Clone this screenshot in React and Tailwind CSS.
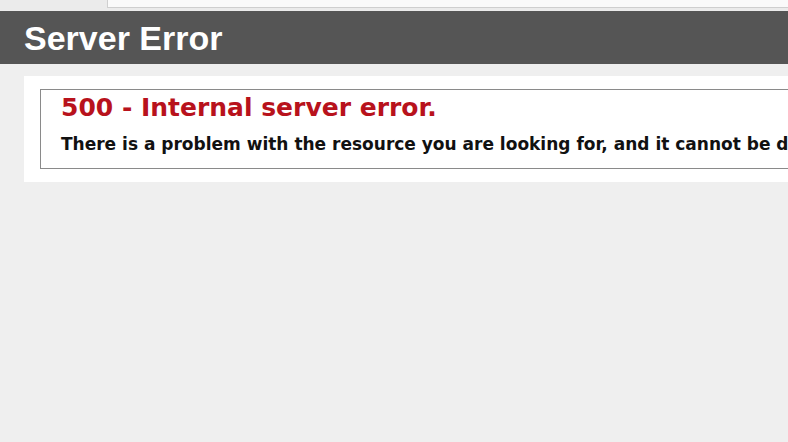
export default function App() {
  return (
    <div className="h-screen w-full overflow-hidden bg-[#efefef] font-['DejaVu_Sans',Verdana,sans-serif]">
      {/* browser chrome sliver */}
      <div className="flex h-[11px] bg-[#ebebeb]">
        <div className="ml-[107px] h-[8px] flex-1 border-b border-l border-[#cfcfcf] bg-[#fafafa]" />
      </div>

      <div className="flex h-[53px] items-center bg-[#555555] pl-[24px]">
        <h1 className="whitespace-nowrap font-['Liberation_Sans',Arial,sans-serif] text-[34px] font-bold leading-none text-white">
          Server Error
        </h1>
      </div>

      <div className="ml-[24px] mt-[12px] w-[900px] bg-white py-[13px] pl-[16px]">
        <div className="h-[80px] border border-[#8a8a8a] pl-[20px] pt-[3px]">
          <h2 className="whitespace-nowrap text-[25px] font-bold leading-[30px] text-[#b8121c]">
            500 - Internal server error.
          </h2>
          <h3 className="mt-[10px] whitespace-nowrap text-[17px] font-bold leading-[22px] text-[#111]">
            There is a problem with the resource you are looking for, and it cannot be displayed.
          </h3>
        </div>
      </div>
    </div>
  );
}
